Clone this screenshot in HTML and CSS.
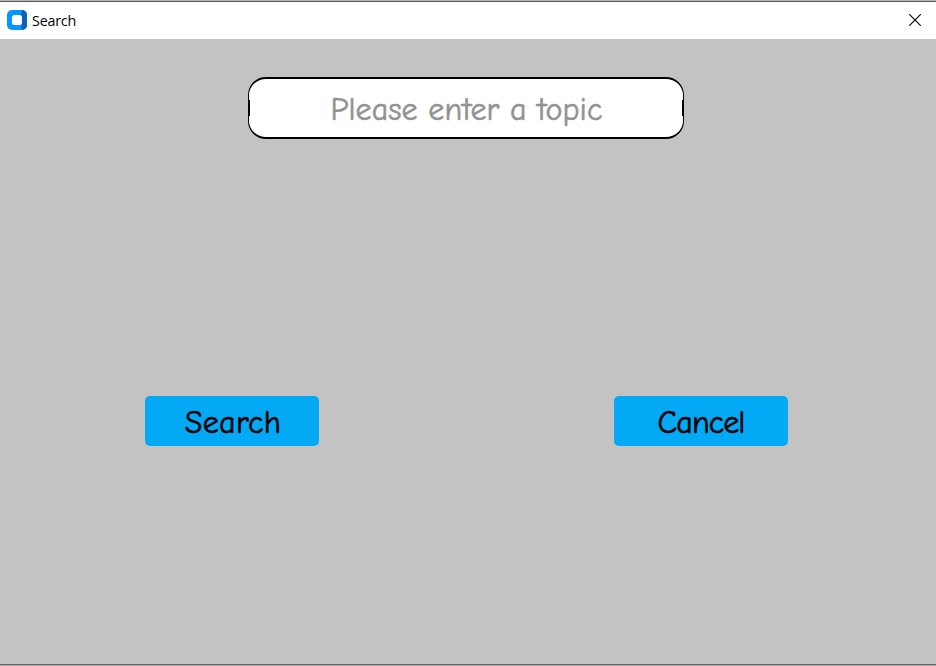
FILE: index.html
```html
<!DOCTYPE html>
<html lang="en">
<head>
<meta charset="utf-8">
<title>Search</title>
<link rel="stylesheet" href="styles.css">
</head>
<body>
<div class="window">
  <header class="titlebar">
    <svg class="logo" width="20" height="20" viewBox="0 0 20 20">
      <rect width="20" height="20" rx="5" fill="#0797fb"/>
      <path d="M15 0a5 5 0 0 1 5 5v10a5 5 0 0 1-5 5l-1-5 1-2V7l-1-2z" fill="#0b62b8"/>
      <rect x="5" y="5" width="10" height="10" rx="2.5" fill="#fff"/>
    </svg>
    <span class="title">Search</span>
    <svg class="close" width="12" height="12" viewBox="0 0 12 12">
      <path d="M.2.2l11.6 11.6M11.8.2L.2 11.8" stroke="#000" stroke-width="1.1"/>
    </svg>
  </header>
  <main class="content">
    <div class="topic"><span class="placeholder">Please enter a topic</span></div>
    <div class="actions">
      <div class="button"><span class="search-label">Search</span></div>
      <div class="button"><span class="cancel-label">Cancel</span></div>
    </div>
  </main>
</div>
</body>
</html>
```
FILE: styles.css
```css
* { box-sizing: border-box; }
body { margin: 0; background: #c3c3c3; }
.window {
  height: 666px;
  display: flex;
  flex-direction: column;
  border-top: 1px solid #b5b5b5;
  border-bottom: 1px solid #a9a9a9;
  overflow: hidden;
}
.titlebar {
  height: 38px;
  flex: none;
  display: flex;
  align-items: center;
  padding: 0 15px 0 7px;
  border-top: 1px solid #5c5c5c;
  background: #fff;
}
.logo { display: block; margin-top: -1px; }
.title {
  margin-left: 5px;
  font: 14.3px/20px "Open Sans", "Noto Sans", sans-serif;
  letter-spacing: -0.2px;
  color: #000;
}
.close { display: block; margin: -1px 0 0 auto; }
.content {
  flex: 1;
  display: flex;
  flex-direction: column;
  background: #c3c3c3;
  border-bottom: 1px solid #666;
  font: 32px/40px "Comic Sans MS", "Comic Neue", Lato, sans-serif;
  -webkit-text-stroke: 0.6px currentColor;
  white-space: nowrap;
}
.topic {
  position: relative;
  width: 436px;
  height: 62px;
  margin: 38px 0 0 248px;
  padding: 4px 0 0 1px;
  display: flex;
  align-items: center;
  justify-content: center;
  background: #fff;
  border: solid #000;
  border-width: 2px 1px;
  border-radius: 18px;
  color: #929292;
}
.topic::before, .topic::after {
  content: "";
  position: absolute;
  top: 21px;
  width: 1px;
  height: 16px;
  background: #000;
}
.topic::before { left: 0; }
.topic::after { right: 0; }
.placeholder { letter-spacing: 0.05px; }
.actions {
  margin: 257px 148px 0 145px;
  display: flex;
  justify-content: space-between;
}
.button {
  width: 174px;
  height: 50px;
  padding-top: 4px;
  display: flex;
  align-items: center;
  justify-content: center;
  border-radius: 5px;
  background: #03a9f4;
  color: #000;
}
.search-label { padding-left: 2px; letter-spacing: 0.3px; }
.cancel-label { letter-spacing: -0.9px; }
```
